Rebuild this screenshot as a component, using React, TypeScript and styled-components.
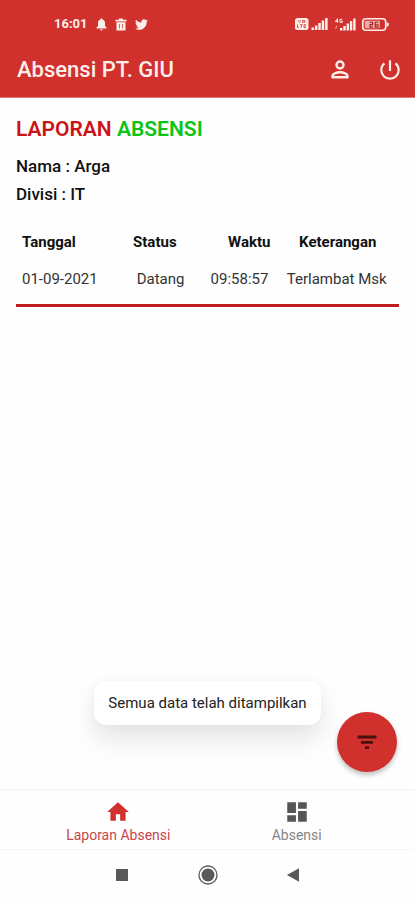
import React from 'react';
import styled, { createGlobalStyle } from 'styled-components';
import { MdDashboard, MdHome, MdPowerSettingsNew } from 'react-icons/md';
import { FaTwitter } from 'react-icons/fa';

const red = '#d0312d';

const GlobalStyle = createGlobalStyle`
  * { box-sizing: border-box; }
  body {
    margin: 0;
    background: #fefefe;
    color: #111;
    font-family: Roboto, "Liberation Sans", sans-serif;
  }
  button { font: inherit; }
`;

const Screen = styled.div`
  display: flex;
  flex-direction: column;
  min-height: 100vh;
`;

const Header = styled.header`
  background: ${red};
  color: #fdeeea;
  border-bottom: 1px solid #dc7a74;
`;

const StatusBar = styled.div`
  display: flex;
  align-items: center;
  justify-content: space-between;
  height: 48px;
  padding: 0 26px 0 54px;
`;

const StatusGroup = styled.div<{ $gap: number }>`
  display: flex;
  align-items: center;
  gap: ${({ $gap }) => $gap}px;
  svg { display: block; }
`;

const Clock = styled.span`
  font-size: 13px;
  line-height: 16px;
  font-weight: 700;
`;

const AppBar = styled.div`
  display: flex;
  align-items: center;
  justify-content: space-between;
  height: 49px;
  padding: 0 12px 6px 17px;
`;

const AppTitle = styled.h1`
  margin: 0;
  font-size: 22px;
  line-height: 28px;
  font-weight: 500;
`;

const Actions = styled.div`
  display: flex;
  gap: 24px;
`;

const IconButton = styled.button`
  display: flex;
  padding: 0;
  border: 0;
  background: none;
  color: inherit;
  cursor: pointer;
`;

const Content = styled.main`
  position: relative;
  flex: 1;
  padding: 18px 16px;
`;

const Heading = styled.h2`
  margin: 0 0 10px;
  color: #cb1418;
  font-size: 21px;
  line-height: 26px;
  font-weight: 600;
`;

const Accent = styled.span`
  color: #0cc414;
`;

const Info = styled.p`
  margin: 0;
  font-size: 17px;
  line-height: 28px;
  font-weight: 500;
`;

const Table = styled.table`
  width: 100%;
  margin-top: 20px;
  border-collapse: collapse;
  table-layout: fixed;
  font-size: 15px;
  line-height: 20px;
`;

const Col = styled.col<{ $width: number }>`
  width: ${({ $width }) => $width}%;
`;

type Align = 'left' | 'center' | 'right';

const HeadCell = styled.th<{ $align: Align }>`
  padding: 4px 6px;
  font-weight: 700;
  text-align: ${({ $align }) => $align};
  white-space: nowrap;
`;

const Cell = styled.td<{ $align: Align }>`
  padding: 13px 8px 15px 6px;
  border-bottom: 3px solid #bd1c1c;
  color: #333;
  text-align: ${({ $align }) => $align};
  white-space: nowrap;
`;

const Toast = styled.div`
  position: absolute;
  left: 0;
  right: 0;
  bottom: 64px;
  width: fit-content;
  margin: 0 auto;
  padding: 12px 14px;
  border-radius: 12px;
  background: #fff;
  box-shadow: 0 14px 26px rgba(0, 0, 0, 0.1), 0 0 12px rgba(0, 0, 0, 0.03);
  color: #222;
  font-size: 15px;
  line-height: 20px;
`;

const FilterButton = styled.button`
  position: absolute;
  right: 18px;
  bottom: 17px;
  display: flex;
  align-items: center;
  justify-content: center;
  width: 60px;
  height: 60px;
  padding: 0;
  border: 0;
  border-radius: 50%;
  background: ${red};
  box-shadow: 0 3px 5px rgba(0, 0, 0, 0.25);
  color: #4a100f;
  cursor: pointer;
`;

const BottomNav = styled.nav`
  display: flex;
  height: 61px;
  padding: 0 7%;
  border-top: 1px solid #f3f3f3;
  border-bottom: 1px solid #f5f5f5;
`;

const NavLink = styled.a<{ $active?: boolean }>`
  display: flex;
  flex: 1;
  flex-direction: column;
  align-items: center;
  padding-top: 9px;
  color: ${({ $active }) => ($active ? red : '#555')};
  text-decoration: none;
`;

const NavLabel = styled.span<{ $active?: boolean }>`
  color: ${({ $active }) => ($active ? '#c8464a' : '#858585')};
  font-size: 14px;
  line-height: 20px;
`;

const SystemBar = styled.div`
  display: flex;
  align-items: center;
  justify-content: center;
  gap: 61px;
  height: 50px;
`;

const SystemButton = styled(IconButton)`
  color: #595959;
`;

const BellIcon = () => (
  <svg width="11" height="13" viewBox="0 0 11 13" fill="currentColor" aria-hidden="true">
    <path d="M5.500 0.500c.6 0 1 .4 1 1C8.300 2 9 3.400 9 5v3l1.500 1.500v1h-10v-1L2 8V5c0-1.600.7-3 2.500-3.500 0-.6.4-1 1-1zM4.200 11.200h2.600c0 .8-.6 1.300-1.300 1.300s-1.300-.5-1.300-1.300z" />
  </svg>
);

const TrashIcon = () => (
  <svg width="12" height="13" viewBox="0 0 12 13" aria-hidden="true">
    <path fill="currentColor" d="M4 0.500h4v1.200h3.500v1.800H.5V1.700H4zM1.500 4.200h9V12.500h-9z" />
    <path stroke={red} d="M4.500 6v4.500M7.500 6v4.500" opacity="0.700" />
  </svg>
);

const VoLteIcon = () => (
  <svg width="14" height="12" viewBox="0 0 14 12" aria-hidden="true">
    <rect width="13.500" height="12" rx="2.500" fill="currentColor" />
    <g fill="none" stroke={red} strokeWidth="0.900" opacity="0.850">
      <path d="M3.500 2.300l1 2 1-2" />
      <rect x="7.500" y="2.600" width="2.200" height="1.700" />
      <path d="M2.500 6.300v3.200h1.600M5 6.700h2.600M6.300 6.700v3M11 6.700H9v2.900h2M9 8.100h1.800" />
    </g>
  </svg>
);

const Signal = () => (
  <svg width="17" height="12" viewBox="0 0 17 12" fill="currentColor" aria-hidden="true">
    <rect x="0.500" y="9.500" width="2.500" height="2.500" />
    <rect x="3.900" y="7.500" width="2.500" height="4.500" />
    <rect x="7.300" y="5" width="2.500" height="7" />
    <rect x="10.700" y="2.500" width="2.500" height="9.500" />
    <rect x="14.100" y="0" width="2.500" height="12" />
  </svg>
);

const RoamingSignal = () => (
  <svg width="22" height="13" viewBox="0 0 22 13" aria-hidden="true">
    <g fill="none" stroke="currentColor" strokeWidth="1">
      <path d="M3.500 4.800V.8L1.300 3.500h3M8.200 1.300H6v3h2.300V3H7.200" />
      <path d="M1.500 11l1.500-3.500" opacity="0.600" />
    </g>
    <g fill="currentColor">
      <rect x="6" y="10" width="2.400" height="2.500" />
      <rect x="9.300" y="8" width="2.400" height="4.500" />
      <rect x="12.600" y="5.500" width="2.400" height="7" />
      <rect x="15.900" y="3" width="2.400" height="9.500" />
      <rect x="19.200" y="0.500" width="2.400" height="12" />
    </g>
  </svg>
);

const BatteryIcon = () => (
  <svg width="27" height="13" viewBox="0 0 27 13" aria-hidden="true">
    <rect x="0.800" y="0.800" width="22.900" height="11.400" rx="3" fill="none" stroke="currentColor" strokeWidth="1.600" />
    <rect x="2.800" y="2.800" width="15" height="7.400" rx="1" fill="currentColor" opacity="0.650" />
    <path fill="currentColor" d="M24.500 4l2.300 1.200v2.600L24.500 9z" />
    <g fill="none" stroke="#a8221f" strokeWidth="1.100">
      <path d="M7.500 4.200h3v2.400H8v2.500h3M16 4.200h-2.800v4.900H16V6.700h-2.500" />
    </g>
  </svg>
);

const PersonIcon = () => (
  <svg width="26" height="26" viewBox="0 0 26 26" fill="none" stroke="currentColor" aria-hidden="true">
    <circle cx="13" cy="8" r="3.500" strokeWidth="2.400" />
    <path d="M5.500 20.300v-1.500c0-2 4-3.500 7.500-3.500s7.500 1.500 7.500 3.500v1.500z" strokeWidth="2.400" strokeLinejoin="round" />
  </svg>
);

const FilterIcon = () => (
  <svg width="24" height="24" viewBox="0 0 24 24" fill="currentColor" aria-hidden="true">
    <rect x="2.500" y="5.500" width="19" height="3" />
    <rect x="6" y="11" width="12" height="2.700" />
    <rect x="10" y="16.300" width="4" height="2.700" />
  </svg>
);

type ReportRow = { date: string; status: string; time: string; note: string };

const rows: ReportRow[] = [
  { date: '01-09-2021', status: 'Datang', time: '09:58:57', note: 'Terlambat Msk' },
];

export default function App() {
  return (
    <>
      <GlobalStyle />
      <Screen>
        <Header>
          <StatusBar>
            <StatusGroup $gap={8}>
              <Clock>16:01</Clock>
              <BellIcon />
              <TrashIcon />
              <FaTwitter size={13} aria-hidden="true" />
            </StatusGroup>
            <StatusGroup $gap={6}>
              <StatusGroup $gap={2}>
                <VoLteIcon />
                <Signal />
              </StatusGroup>
              <RoamingSignal />
              <BatteryIcon />
            </StatusGroup>
          </StatusBar>
          <AppBar>
            <AppTitle>Absensi PT. GIU</AppTitle>
            <Actions>
              <IconButton type="button" aria-label="Profil">
                <PersonIcon />
              </IconButton>
              <IconButton type="button" aria-label="Keluar">
                <MdPowerSettingsNew size={26} />
              </IconButton>
            </Actions>
          </AppBar>
        </Header>

        <Content>
          <Heading>
            LAPORAN <Accent>ABSENSI</Accent>
          </Heading>
          <Info>Nama : Arga</Info>
          <Info>Divisi : IT</Info>
          <Table>
            <colgroup>
              <Col $width={29} />
              <Col $width={18} />
              <Col $width={21} />
              <Col $width={32} />
            </colgroup>
            <thead>
              <tr>
                <HeadCell scope="col" $align="left">Tanggal</HeadCell>
                <HeadCell scope="col" $align="left">Status</HeadCell>
                <HeadCell scope="col" $align="right">Waktu</HeadCell>
                <HeadCell scope="col" $align="center">Keterangan</HeadCell>
              </tr>
            </thead>
            <tbody>
              {rows.map((row) => (
                <tr key={`${row.date} ${row.time}`}>
                  <Cell $align="left">{row.date}</Cell>
                  <Cell $align="center">{row.status}</Cell>
                  <Cell $align="right">{row.time}</Cell>
                  <Cell $align="center">{row.note}</Cell>
                </tr>
              ))}
            </tbody>
          </Table>
          <Toast role="status">Semua data telah ditampilkan</Toast>
          <FilterButton type="button" aria-label="Filter">
            <FilterIcon />
          </FilterButton>
        </Content>

        <BottomNav>
          <NavLink href="#laporan" $active aria-current="page">
            <MdHome size={26} />
            <NavLabel $active>Laporan Absensi</NavLabel>
          </NavLink>
          <NavLink href="#absensi">
            <MdDashboard size={26} />
            <NavLabel>Absensi</NavLabel>
          </NavLink>
        </BottomNav>

        <SystemBar>
          <SystemButton type="button" aria-label="Aplikasi terbaru">
            <svg width="24" height="24" viewBox="0 0 24 24">
              <rect x="5" y="6" width="12" height="12" fill="currentColor" />
            </svg>
          </SystemButton>
          <SystemButton type="button" aria-label="Beranda">
            <svg width="24" height="24" viewBox="0 0 24 24">
              <circle cx="12" cy="12" r="9" fill="none" stroke="currentColor" strokeWidth="1.300" />
              <circle cx="12" cy="12" r="6.500" fill="currentColor" />
            </svg>
          </SystemButton>
          <SystemButton type="button" aria-label="Kembali">
            <svg width="24" height="24" viewBox="0 0 24 24">
              <path d="M18 5.200v13.600L6 12z" fill="currentColor" />
            </svg>
          </SystemButton>
        </SystemBar>
      </Screen>
    </>
  );
}
